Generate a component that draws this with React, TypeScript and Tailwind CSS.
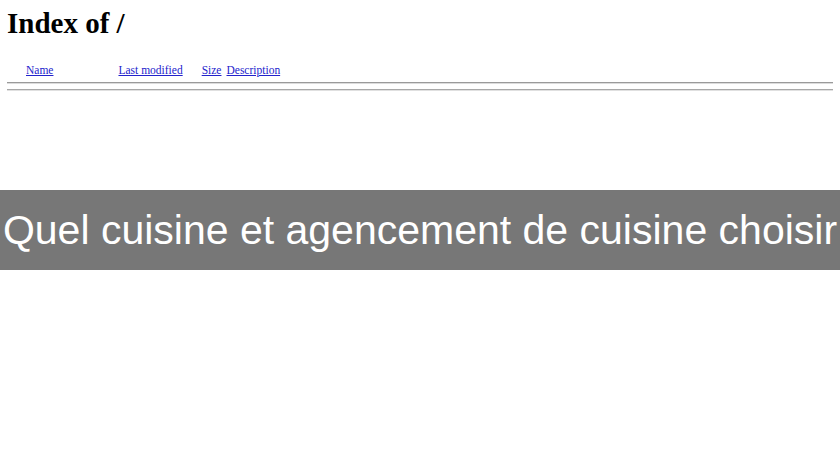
export default function App() {
  const serif = { fontFamily: '"Liberation Serif", "Times New Roman", serif' };
  return (
    <div className="relative h-[460px] w-[840px] overflow-hidden bg-white">
      <div className="px-[7px] pt-[5px]" style={serif}>
        <h1 className="text-[29px] font-bold leading-[36px] text-black">Index of /</h1>
        <div className="mt-[22px] flex text-[11.5px] leading-[14px] text-[#2222cc]">
          <a href="#" className="ml-[19px] underline">Name</a>
          <a href="#" className="ml-[65px] underline">Last modified</a>
          <a href="#" className="ml-[19px] underline">Size</a>
          <a href="#" className="ml-[5px] underline">Description</a>
        </div>
        <div className="mt-[5px] h-[2px] w-[826px] border-t border-[#9a9a9a] border-b-[#dcdcdc] border-b" />
        <div className="mt-[5px] h-[2px] w-[826px] border-t border-[#a8a8a8] border-b-[#e0e0e0] border-b" />
      </div>
      <div className="mt-[99px] flex h-[80px] items-center justify-center whitespace-nowrap bg-[#777777]">
        <span className="text-[41px] leading-none text-white" style={{ fontFamily: '"Liberation Sans", Arial, sans-serif' }}>
          Quel cuisine et agencement de cuisine choisir
        </span>
      </div>
    </div>
  );
}
